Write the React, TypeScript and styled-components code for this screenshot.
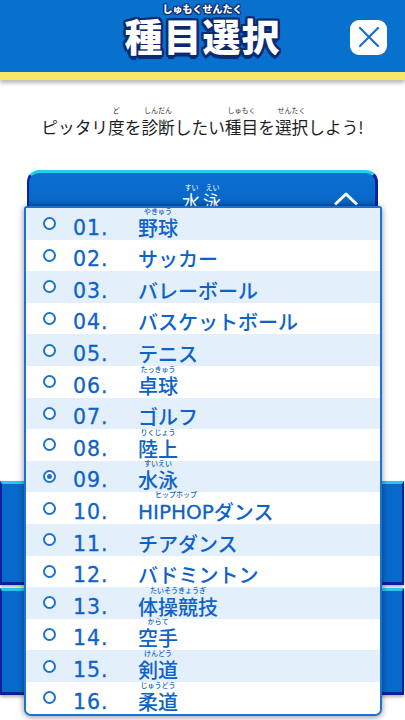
import React from 'react'
import styled, { createGlobalStyle } from 'styled-components'

const JP = `"Noto Sans CJK JP", "Noto Sans", sans-serif`
const LATIN = `"DejaVu Sans", "Noto Sans CJK JP", sans-serif`

const GlobalStyle = createGlobalStyle`
  html, body {
    margin: 0;
    padding: 0;
    background: #ffffff;
    overflow: hidden;
  }
  body {
    font-family: ${JP};
  }
  * {
    box-sizing: border-box;
  }
`

interface Sport {
  no: string
  name: string
  ruby?: string
  latin?: string
}

const sports: Sport[] = [
  { no: '01.', name: '野球', ruby: 'やきゅう' },
  { no: '02.', name: 'サッカー' },
  { no: '03.', name: 'バレーボール' },
  { no: '04.', name: 'バスケットボール' },
  { no: '05.', name: 'テニス' },
  { no: '06.', name: '卓球', ruby: 'たっきゅう' },
  { no: '07.', name: 'ゴルフ' },
  { no: '08.', name: '陸上', ruby: 'りくじょう' },
  { no: '09.', name: '水泳', ruby: 'すいえい' },
  { no: '10.', name: 'ダンス', latin: 'HIPHOP', ruby: 'ヒップホップ' },
  { no: '11.', name: 'チアダンス' },
  { no: '12.', name: 'バドミントン' },
  { no: '13.', name: '体操競技', ruby: 'たいそうきょうぎ' },
  { no: '14.', name: '空手', ruby: 'からて' },
  { no: '15.', name: '剣道', ruby: 'けんどう' },
  { no: '16.', name: '柔道', ruby: 'じゅうどう' },
]

const SELECTED = '09.'

const Page = styled.div`
  width: 405px;
  min-height: 720px;
`

// furigana: reading on top, base text below, sits on the line's bottom
const RubyWrap = styled.span`
  display: inline-flex;
  flex-direction: column;
  align-items: center;
  vertical-align: bottom;
`

const Reading = styled.span<{ $size: number }>`
  font-size: ${({ $size }) => $size}px;
  line-height: ${({ $size }) => $size + 1}px;
  margin-bottom: 1px;
  white-space: nowrap;
  letter-spacing: 0;
`

const Ruby: React.FC<{ rt: string; size: number; children: React.ReactNode }> = ({ rt, size, children }) => (
  <RubyWrap>
    <Reading $size={size}>{rt}</Reading>
    <span>{children}</span>
  </RubyWrap>
)

const Header = styled.header`
  height: 80px;
  background: #0870cd;
  border-bottom: 8px solid #f6e865;
  box-shadow: 0 3px 4px rgba(0, 0, 0, 0.28);
  display: grid;
  grid-template-columns: 1fr auto 1fr;
  align-items: center;
`

const Title = styled.h1`
  grid-column: 2;
  align-self: start;
  margin: 3px 0 0;
  font-family: ${JP};
  font-weight: 900;
  font-size: 38px;
  line-height: 40px;
  letter-spacing: 1px;
  color: #ffffff;
  text-shadow:
    2.5px 0 0 #0c2a72, -2.5px 0 0 #0c2a72, 0 2.5px 0 #0c2a72, 0 -2.5px 0 #0c2a72,
    2px 2px 0 #0c2a72, -2px 2px 0 #0c2a72, 2px -2px 0 #0c2a72, -2px -2px 0 #0c2a72,
    0 3.5px 1px #0c2a72;

  ${Reading} {
    font-weight: 900;
    text-shadow:
      1px 0 0 #0c2a72, -1px 0 0 #0c2a72, 0 1px 0 #0c2a72, 0 -1px 0 #0c2a72,
      1px 1px 0 #0c2a72, -1px 1px 0 #0c2a72, 1px -1px 0 #0c2a72, -1px -1px 0 #0c2a72;
  }
`

const CloseButton = styled.button`
  grid-column: 3;
  justify-self: end;
  margin: 2px 18px 0 0;
  width: 37px;
  height: 35px;
  border: none;
  border-radius: 9px;
  background: #ffffff;
  display: flex;
  align-items: center;
  justify-content: center;
  padding: 0;
  cursor: pointer;
`

const Lead = styled.p`
  margin: 26px 0 0;
  text-align: center;
  font-family: ${JP};
  font-size: 16.7px;
  line-height: 24px;
  color: #1e1e1e;

  ${Reading} {
    color: #333333;
  }
`

const SelectArea = styled.div`
  position: relative;
  margin: 31px 27px 0;
`

const SelectHead = styled.div`
  height: 44px;
  border-radius: 12px 12px 0 0;
  background: linear-gradient(#0a6fd2 0%, #0868c8 65%, #04419a 100%);
  border-top: 3px solid #22cdf2;
  border-left: 2px solid #0b22a0;
  border-right: 3px solid #0b22a0;
  display: grid;
  grid-template-columns: 1fr auto 1fr;
  align-items: start;
  padding-top: 10px;
`

const HeadLabel = styled.div`
  grid-column: 2;
  font-family: ${JP};
  font-size: 18px;
  line-height: 19px;
  color: #ffffff;
  letter-spacing: 1px;
  display: flex;
  gap: 2px;
`

const Chevron = styled.svg`
  grid-column: 3;
  justify-self: end;
  margin: 9px 16px 0 0;
`

const Dropdown = styled.ul`
  position: absolute;
  top: 36px;
  left: -3px;
  width: 358px;
  margin: 0;
  padding: 0;
  list-style: none;
  background: #ffffff;
  border: 2px solid #1a72d2;
  border-radius: 3px 3px 7px 7px;
  box-shadow: 0 1px 6px rgba(0, 0, 0, 0.45);
  overflow: hidden;
  z-index: 2;
`

const Row = styled.li<{ $striped: boolean }>`
  height: 31.6px;
  background: ${({ $striped }) => ($striped ? '#e3effa' : '#ffffff')};
  display: flex;
  align-items: flex-end;
  padding: 0 0 0 17px;
  color: #0e63c8;
`

const Radio = styled.span<{ $checked: boolean }>`
  align-self: center;
  width: 13px;
  height: 13px;
  border-radius: 50%;
  border: 2.5px solid #1a72d2;
  background: #ffffff;
  flex: none;
  display: flex;
  align-items: center;
  justify-content: center;

  &::after {
    content: '';
    width: 5px;
    height: 5px;
    border-radius: 50%;
    background: ${({ $checked }) => ($checked ? '#1a72d2' : 'transparent')};
  }
`

const Num = styled.span`
  width: 65px;
  margin-left: 17px;
  font-family: ${LATIN};
  font-weight: 400;
  font-size: 20.5px;
  line-height: 24px;
  letter-spacing: 1px;
  -webkit-text-stroke: 0.3px currentColor;
  flex: none;
`

const Name = styled.span`
  font-family: ${JP};
  font-weight: 500;
  font-size: 20px;
  line-height: 24px;
  white-space: nowrap;

  ${Reading} {
    font-family: ${JP};
    font-weight: 500;
  }
`

const Latin = styled.span`
  font-family: ${LATIN};
  font-weight: 400;
  -webkit-text-stroke: 0.3px currentColor;
`

const Cards = styled.div`
  margin-top: 267px;
  display: flex;
  flex-direction: column;
  gap: 3px;
  padding-right: 1px;
`

const Card = styled.div<{ $h: number }>`
  height: ${({ $h }) => $h}px;
  background: #0869cd;
  border-top: 3px solid #29c6ee;
  border-left: 2px solid #0c1f9c;
  border-right: 2px solid #0c1f9c;
  border-bottom: 3px solid #0c1f9c;
  box-shadow: 0 2px 3px rgba(0, 0, 0, 0.3);
`

const SportName: React.FC<{ sport: Sport }> = ({ sport }) => {
  if (sport.latin) {
    return (
      <Name>
        <Ruby rt={sport.ruby ?? ''} size={7}>
          <Latin>{sport.latin}</Latin>
        </Ruby>
        {sport.name}
      </Name>
    )
  }
  if (!sport.ruby) return <Name>{sport.name}</Name>
  return (
    <Name>
      <Ruby rt={sport.ruby} size={7}>
        {sport.name}
      </Ruby>
    </Name>
  )
}

const App: React.FC = () => (
  <Page>
    <GlobalStyle />
    <Header>
      <Title>
        <Ruby rt="しゅもくせんたく" size={10}>
          種目選択
        </Ruby>
      </Title>
      <CloseButton aria-label="閉じる">
        <svg width="22" height="22" viewBox="0 0 22 22">
          <path d="M2 2 L20 20 M20 2 L2 20" stroke="#1a6fcb" strokeWidth="2.2" strokeLinecap="round" />
        </svg>
      </CloseButton>
    </Header>

    <Lead>
      ピッタリ
      <Ruby rt="ど" size={7}>度</Ruby>を
      <Ruby rt="しんだん" size={7}>診断</Ruby>したい
      <Ruby rt="しゅもく" size={7}>種目</Ruby>を
      <Ruby rt="せんたく" size={7}>選択</Ruby>しよう!
    </Lead>

    <SelectArea>
      <SelectHead>
        <HeadLabel>
          <Ruby rt="すい" size={7}>水</Ruby>
          <Ruby rt="えい" size={7}>泳</Ruby>
        </HeadLabel>
        <Chevron width="26" height="14" viewBox="0 0 26 14">
          <path d="M2 12.5 L13 2 L24 12.5" fill="none" stroke="#ffffff" strokeWidth="3" strokeLinejoin="round" />
        </Chevron>
      </SelectHead>

      <Dropdown>
        {sports.map((s, i) => (
          <Row key={s.no} $striped={i % 2 === 0}>
            <Radio $checked={s.no === SELECTED} />
            <Num>{s.no}</Num>
            <SportName sport={s} />
          </Row>
        ))}
      </Dropdown>
    </SelectArea>

    <Cards>
      <Card $h={104} />
      <Card $h={107} />
    </Cards>
  </Page>
)

export default App
